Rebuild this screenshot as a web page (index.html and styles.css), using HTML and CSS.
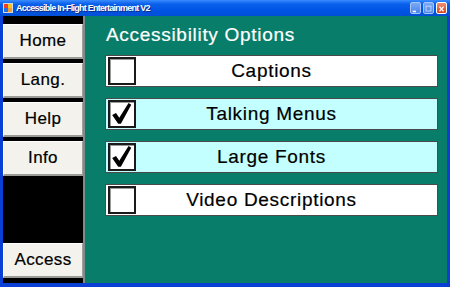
FILE: index.html
```html
<!DOCTYPE html>
<html lang="en">
  <head>
    <meta charset="UTF-8" />
    <title>Accessible In-Flight Entertainment V2</title>
    <link rel="stylesheet" href="styles.css">
  </head>
  <body>
    <div class="window">
      <div class="titlebar">
        <svg class="app-icon" width="10" height="10" viewBox="0 0 10 10">
          <rect x="0" y="0" width="10" height="10" fill="#d8d8d8" />
          <rect x="1" y="1" width="4" height="4" fill="#e8402a" />
          <rect x="5" y="1" width="4" height="4" fill="#f5c518" />
          <rect x="1" y="5" width="4" height="4" fill="#2a6ee8" />
          <rect x="5" y="5" width="4" height="4" fill="#f0a030" />
        </svg>
        <span class="title">Accessible In-Flight Entertainment V2</span>
        <div class="controls">
          <span class="ctl ctl-off"><svg width="11" height="12" viewBox="0 0 11 12"><rect x="2" y="8" width="4" height="2" fill="#fff" /></svg></span>
          <span class="ctl ctl-off"><svg width="11" height="12" viewBox="0 0 11 12"><rect x="2.5" y="2.5" width="6" height="6" fill="none" stroke="#cfe0ff" /></svg></span>
          <span class="ctl ctl-close"><svg width="11" height="12" viewBox="0 0 11 12"><path d="M3 3 L8 9 M8 3 L3 9" stroke="#fff" stroke-width="1.6" /></svg></span>
        </div>
      </div>

      <div class="frame">
        <div class="sidebar">
          <button class="nav-btn">Home</button>
          <button class="nav-btn">Lang.</button>
          <button class="nav-btn">Help</button>
          <button class="nav-btn">Info</button>
          <button class="nav-btn access">Access</button>
        </div>

        <div class="content">
          <h1>Accessibility Options</h1>
          <div class="options">
            <div class="option">
              <span class="box"></span>
              <span class="label">Captions</span>
            </div>
            <div class="option on">
              <span class="box">
                <svg width="24" height="24" viewBox="0 0 22 22"><polygon points="2,12 5.5,10 8.5,14.5 17,1 19.5,2.5 10,20 7.5,20" fill="#000" /></svg>
              </span>
              <span class="label">Talking Menus</span>
            </div>
            <div class="option on">
              <span class="box">
                <svg width="24" height="24" viewBox="0 0 22 22"><polygon points="2,12 5.5,10 8.5,14.5 17,1 19.5,2.5 10,20 7.5,20" fill="#000" /></svg>
              </span>
              <span class="label">Large Fonts</span>
            </div>
            <div class="option">
              <span class="box"></span>
              <span class="label">Video Descriptions</span>
            </div>
          </div>
        </div>
      </div>
    </div>
  </body>
</html>
```

FILE: styles.css
```css
body {
  margin: 0;
  font-family: "Liberation Sans", Arial, sans-serif;
}
.window {
  width: 450px;
  height: 287px;
  display: flex;
  flex-direction: column;
  background: #0a3fd6;
}
.titlebar {
  height: 16px;
  display: flex;
  align-items: center;
  padding: 0 3px;
  background: linear-gradient(to bottom, #3a8cff 0%, #0a60ea 25%, #0055e5 60%, #0050d6 100%);
}
.app-icon {
  margin-right: 3px;
}
.title {
  color: #fff;
  font-size: 9px;
  font-weight: bold;
  letter-spacing: -0.75px;
  text-shadow: 1px 1px #0a2a8a;
}
.controls {
  margin-left: auto;
  display: flex;
  gap: 2px;
}
.ctl {
  width: 11px;
  height: 12px;
  border: 1px solid #fff;
  border-radius: 2px;
  box-sizing: border-box;
  display: flex;
}
.ctl-off {
  background: linear-gradient(to bottom, #7aaaf5, #4a84ea);
  border-color: #a8c6f8;
}
.ctl-close {
  background: linear-gradient(to bottom, #f09070, #d8401c);
}
.frame {
  flex: 1;
  display: flex;
  margin: 0 3px 4px 3px;
}
.sidebar {
  width: 80px;
  background: #000;
  border-right: 2px solid #7f8c88;
  display: flex;
  flex-direction: column;
  gap: 4px;
  padding-top: 8px;
  padding-bottom: 5px;
}
.nav-btn {
  height: 35px;
  width: 100%;
  background: #f3f2ed;
  border: 1px solid #fff;
  border-right-color: #a0a0a0;
  border-bottom: 2px solid #9a9a96;
  font-family: "Liberation Sans", Arial, sans-serif;
  font-size: 17px;
  letter-spacing: 0.4px;
  -webkit-text-stroke: 0.2px #000;
  color: #000;
  padding: 0;
}
.access {
  margin-top: auto;
}
.content {
  flex: 1;
  background: #087d6a;
  padding: 9px 9px 0 20px;
}
h1 {
  margin: 0 0 10px 1px;
  font-size: 19px;
  line-height: 20px;
  font-weight: normal;
  letter-spacing: 0.7px;
  -webkit-text-stroke: 0.2px #fff;
  color: #fff;
}
.options {
  display: flex;
  flex-direction: column;
  gap: 11px;
}
.option {
  height: 32px;
  box-sizing: border-box;
  border: 1px solid #4a4a4a;
  background: #fff;
  display: grid;
  grid-template-columns: 28px 1fr 28px;
  align-items: center;
  padding: 0 2px;
}
.option.on {
  background: #c4ffff;
}
.box {
  width: 28px;
  height: 28px;
  box-sizing: border-box;
  border: 2px solid #1a1a1a;
  box-shadow: inset 1px 1px #9a9a9a;
  background: #fff;
  display: flex;
  align-items: center;
  justify-content: center;
}
.label {
  text-align: center;
  font-size: 19px;
  letter-spacing: 0.7px;
  -webkit-text-stroke: 0.2px #000;
  color: #000;
}
```
